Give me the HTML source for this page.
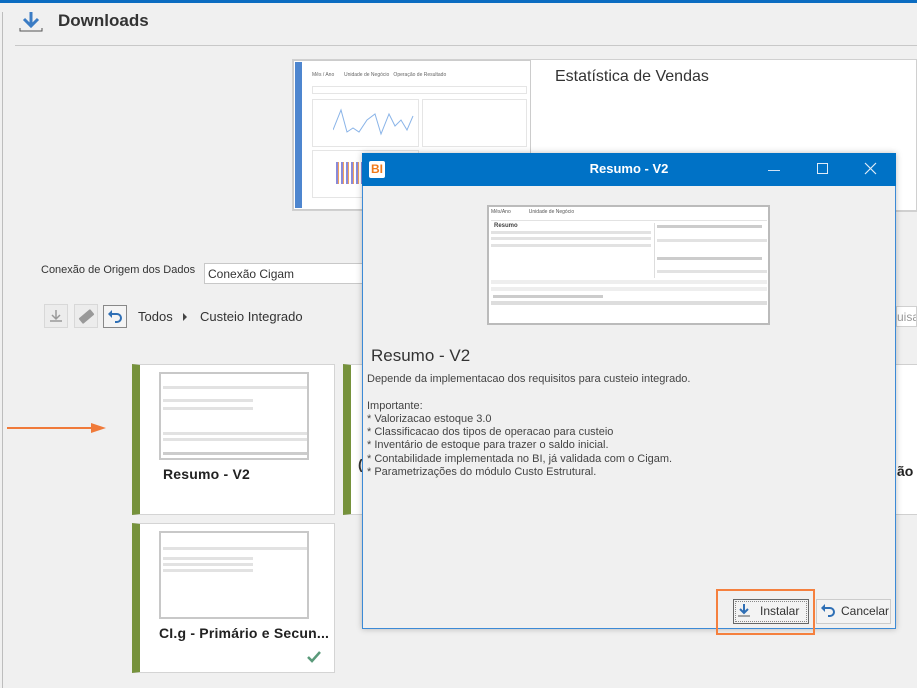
<!DOCTYPE html>
<html><head><meta charset="utf-8"><style>
*{margin:0;padding:0;box-sizing:border-box}
body{width:917px;height:688px;overflow:hidden;background:#f0f0f0;font-family:"Liberation Sans",sans-serif;position:relative;color:#333}
.a{position:absolute}
.thumb{position:absolute;background:#fff;border:2px solid #c8c8c8;overflow:hidden}
.thumb .r{position:absolute;background:#e2e2e2;height:3px}
.card{position:absolute;background:#fff;border:1px solid #d4d4d4;border-left:8px solid #76923c}
.ctitle{position:absolute;font-weight:bold;font-size:14px;color:#222;letter-spacing:.2px;white-space:nowrap}
</style></head><body>
<div class="a" style="left:0;top:0;width:917px;height:3px;background:#0b6cc1"></div>
<div class="a" style="left:2px;top:12px;width:1px;height:676px;background:#bdbdbd"></div>
<svg class="a" style="left:19px;top:11px" width="24" height="22" viewBox="0 0 24 22"><path d="M12 1v13M5 8l7 7 7-7" stroke="#3b7cc4" stroke-width="3" fill="none"/><path d="M1 17v3h22v-3" stroke="#555" stroke-width="1" fill="none"/></svg>
<div class="a" style="left:58px;top:11px;font-size:17px;font-weight:bold;color:#333">Downloads</div>
<div class="a" style="left:15px;top:45px;width:902px;height:1px;background:#c8c8c8"></div>
<div class="a" style="left:292px;top:59px;width:625px;height:152px;background:#fff;border:1px solid #d0d0d0"></div>
<div class="a" style="left:293px;top:60px;width:238px;height:150px;border:1px solid #ccc;background:#fff"></div>
<div class="a" style="left:295px;top:62px;width:7px;height:146px;background:#4e86cf"></div>
<div class="a" style="left:312px;top:72px;width:210px;height:13px;font-size:5px;color:#666">Mês / Ano &nbsp; &nbsp; &nbsp; Unidade de Negócio &nbsp; Operação de Resultado</div>
<div class="a" style="left:312px;top:86px;width:215px;height:8px;border:1px solid #e5e5e5"></div>
<div class="a" style="left:312px;top:99px;width:107px;height:48px;border:1px solid #e5e5e5"></div>
<svg class="a" style="left:333px;top:108px" width="85" height="30"><polyline points="0,22 8,2 14,24 20,20 26,24 34,12 42,6 48,26 56,6 62,18 68,12 74,22 80,8" fill="none" stroke="#8ab4e8" stroke-width="1"/></svg>
<div class="a" style="left:422px;top:99px;width:105px;height:48px;border:1px solid #e5e5e5"></div>
<div class="a" style="left:312px;top:150px;width:107px;height:48px;border:1px solid #e5e5e5"></div>
<div class="a" style="left:336px;top:162px;width:28px;height:22px;background:repeating-linear-gradient(90deg,#8a8ad8 0 2px,#f0a060 2px 3px,#fff 3px 5px)"></div>
<div class="a" style="left:555px;top:68px;font-size:16px;color:#333">Estatística de Vendas</div>
<div class="a" style="left:41px;top:264px;font-size:11px;color:#333">Conexão de Origem dos Dados</div>
<div class="a" style="left:204px;top:263px;width:170px;height:21px;background:#fff;border:1px solid #c8c8c8;font-size:12px;padding:3px 3px">Conexão Cigam</div>
<div class="a" style="left:44px;top:304px;width:24px;height:24px;border:1px solid #d8d8d8;background:#ececec"></div>
<svg class="a" style="left:49px;top:309px" width="14" height="14"><path d="M7 1v8M3 6l4 4 4-4M1 12h12" stroke="#999" stroke-width="1.5" fill="none"/></svg>
<div class="a" style="left:74px;top:304px;width:24px;height:24px;border:1px solid #d8d8d8;background:#ececec"></div>
<div class="a" style="left:79px;top:313px;width:15px;height:7px;background:#999;transform:rotate(-40deg);border-radius:1px"></div>
<div class="a" style="left:103px;top:305px;width:24px;height:23px;border:1px solid #888;background:#f4f4f4"></div>
<svg class="a" style="left:107px;top:309px" width="16" height="14"><path d="M3 5h7a4 4 0 0 1 0 8H8" stroke="#2f6fb5" stroke-width="2" fill="none"/><path d="M1 5l4-4v8z" fill="#2f6fb5"/></svg>
<div class="a" style="left:138px;top:309px;font-size:13px;color:#333">Todos</div>
<div class="a" style="left:183px;top:313px;width:0;height:0;border-left:4px solid #444;border-top:4px solid transparent;border-bottom:4px solid transparent"></div>
<div class="a" style="left:200px;top:309px;font-size:13px;color:#333">Custeio Integrado</div>
<div class="a" style="left:896px;top:211px;width:21px;height:1px;background:#d0d0d0"></div>
<div class="a" style="left:896px;top:306px;width:21px;height:21px;background:#fff;border:1px solid #d0d0d0;font-size:12px;color:#999;padding-top:3px;overflow:hidden;white-space:nowrap">uisar</div>
<div class="a" style="left:896px;top:364px;width:21px;height:151px;background:#fff;border-top:1px solid #d0d0d0;border-bottom:1px solid #d0d0d0;overflow:hidden">
<div class="a" style="left:1px;top:98px;font-size:14px;font-weight:bold;color:#222;white-space:nowrap">ão x</div></div>
<div class="a" style="left:7px;top:427px;width:88px;height:2px;background:#f07a3a"></div>
<div class="a" style="left:91px;top:423px;width:0;height:0;border-left:15px solid #f07a3a;border-top:5px solid transparent;border-bottom:5px solid transparent"></div>
<div class="card" style="left:132px;top:364px;width:203px;height:151px"></div>
<div class="thumb" style="left:159px;top:372px;width:150px;height:88px">
<div class="r" style="left:2px;top:12px;width:144px"></div><div class="r" style="left:2px;top:25px;width:90px"></div><div class="r" style="left:2px;top:33px;width:90px"></div><div class="r" style="left:2px;top:58px;width:144px"></div><div class="r" style="left:2px;top:64px;width:144px"></div><div class="r" style="left:2px;top:78px;width:144px;background:#ccc"></div>
</div>
<div class="ctitle" style="left:163px;top:466px">Resumo - V2</div>
<div class="card" style="left:343px;top:364px;width:30px;height:151px"></div>
<div class="a" style="left:358px;top:456px;font-size:14px;font-weight:bold">(</div>
<div class="card" style="left:132px;top:523px;width:203px;height:150px"></div>
<div class="thumb" style="left:159px;top:531px;width:150px;height:88px">
<div class="r" style="left:2px;top:14px;width:144px"></div><div class="r" style="left:2px;top:24px;width:90px"></div><div class="r" style="left:2px;top:30px;width:90px"></div><div class="r" style="left:2px;top:36px;width:90px"></div>
</div>
<div class="ctitle" style="left:159px;top:625px">CI.g - Primário e Secun...</div>
<svg class="a" style="left:306px;top:650px" width="16" height="14"><path d="M2 7l4 4 8-9" stroke="#5a9a7a" stroke-width="2.5" fill="none"/></svg>
<div class="a" style="left:362px;top:153px;width:534px;height:476px;background:#f0f0f0;border:1px solid #3c8ad6;box-shadow:0 0 6px rgba(0,0,0,.25)"></div>
<div class="a" style="left:362px;top:153px;width:534px;height:33px;background:#0072c6"></div>
<div class="a" style="left:369px;top:161px;width:16px;height:17px;background:#fff;border-radius:2px;color:#f07a1a;font-weight:bold;font-size:12px;text-align:center;line-height:17px">BI</div>
<div class="a" style="left:362px;top:161px;width:534px;text-align:center;color:#fff;font-weight:bold;font-size:13px">Resumo - V2</div>
<div class="a" style="left:768px;top:170px;width:12px;height:1px;background:#cfe2f5"></div>
<div class="a" style="left:817px;top:163px;width:11px;height:11px;border:1px solid #e0ecf8"></div>
<svg class="a" style="left:864px;top:162px" width="13" height="13"><path d="M1 1l11 11M12 1L1 12" stroke="#e0ecf8" stroke-width="1.2"/></svg>
<div class="thumb" style="left:487px;top:205px;width:283px;height:120px;border-color:#bbb">
<div class="a" style="left:2px;top:2px;width:276px;height:12px;border-bottom:1px solid #e2e2e2;font-size:5px;color:#555">Mês/Ano &nbsp; &nbsp; &nbsp; &nbsp; &nbsp; &nbsp; Unidade de Negócio</div>
<div class="a" style="left:5px;top:16px;font-size:6px;font-weight:bold;color:#444">Resumo</div>
<div class="r" style="left:2px;top:24px;width:160px"></div><div class="r" style="left:2px;top:30px;width:160px"></div><div class="r" style="left:2px;top:37px;width:160px"></div>
<div class="a" style="left:165px;top:16px;width:1px;height:55px;background:#ddd"></div>
<div class="r" style="left:168px;top:18px;width:105px;background:#ccc"></div><div class="r" style="left:168px;top:32px;width:110px"></div>
<div class="r" style="left:168px;top:50px;width:105px;background:#ccc"></div><div class="r" style="left:168px;top:63px;width:110px"></div>
<div class="r" style="left:2px;top:73px;width:276px;height:4px;background:#eee"></div><div class="r" style="left:2px;top:80px;width:276px;height:4px;background:#eee"></div>
<div class="r" style="left:4px;top:88px;width:110px;background:#ccc"></div>
<div class="r" style="left:2px;top:94px;width:276px;height:4px;background:#ddd"></div>
</div>
<div class="a" style="left:371px;top:346px;font-size:17px;color:#333">Resumo - V2</div>
<div class="a" style="left:367px;top:373px;font-size:11px;line-height:13.3px;color:#444">Depende da implementacao dos requisitos para custeio integrado.<br><br>Importante:<br>* Valorizacao estoque 3.0<br>* Classificacao dos tipos de operacao para custeio<br>* Inventário de estoque para trazer o saldo inicial.<br>* Contabilidade implementada no BI, já validada com o Cigam.<br>* Parametrizações do módulo Custo Estrutural.</div>
<div class="a" style="left:733px;top:599px;width:76px;height:25px;border:1px solid #666;background:#f3f3f3;outline:1px dotted #888;outline-offset:-3px"></div>
<svg class="a" style="left:737px;top:603px" width="14" height="15"><path d="M7 1v8M3 6l4 4 4-4" stroke="#2f6fb5" stroke-width="2" fill="none"/><path d="M1 13h12" stroke="#555" stroke-width="1"/></svg>
<div class="a" style="left:760px;top:604px;font-size:12px;color:#333">Instalar</div>
<div class="a" style="left:816px;top:599px;width:75px;height:25px;border:1px solid #ccc;background:#f3f3f3"></div>
<svg class="a" style="left:820px;top:603px" width="16" height="14"><path d="M3 5h7a4 4 0 0 1 0 8H8" stroke="#2f6fb5" stroke-width="2" fill="none"/><path d="M1 5l4-4v8z" fill="#2f6fb5"/></svg>
<div class="a" style="left:841px;top:604px;font-size:12px;color:#333">Cancelar</div>
<div class="a" style="left:716px;top:589px;width:99px;height:46px;border:2px solid #f5803e"></div>
</body></html>
